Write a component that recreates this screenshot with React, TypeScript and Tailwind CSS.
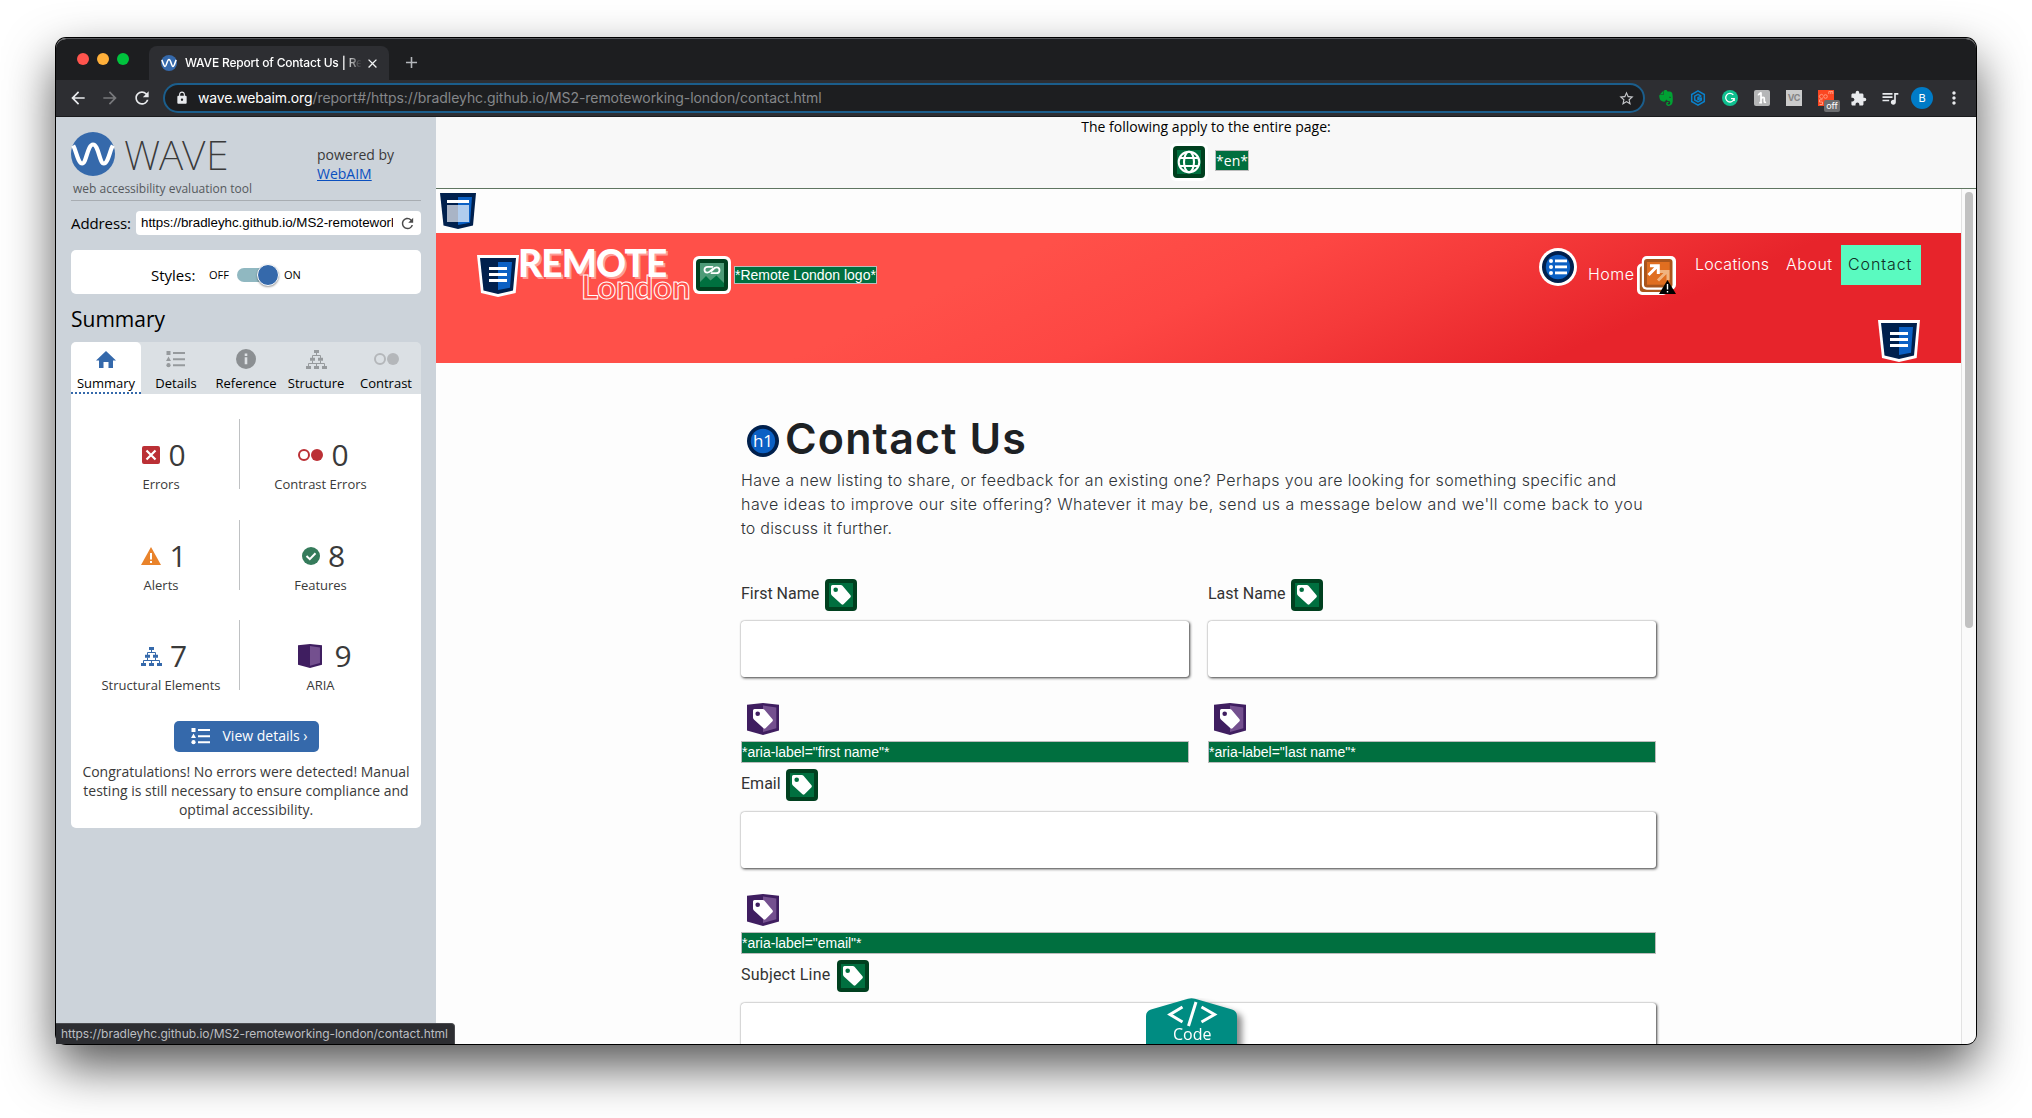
import type { ReactNode } from "react";
import {
  MdAdd,
  MdArrowBack,
  MdArrowForward,
  MdClose,
  MdExtension,
  MdLock,
  MdMoreVert,
  MdQueueMusic,
  MdRefresh,
  MdStarBorder,
} from "react-icons/md";
import { SiEvernote } from "react-icons/si";

function WaveLogo({ size }: { size: number }) {
  return (
    <svg width={size} height={size} viewBox="0 0 44 44" className="shrink-0">
      <circle cx="22" cy="22" r="22" fill="#3569ab" />
      <path
        d="M2.200 13.500C5 18 7 31.500 11.200 31.500S16.500 12.500 22 12.500 28.500 31.500 32.800 31.500 39 18 41.800 13.500"
        fill="none"
        stroke="#fff"
        strokeWidth="4.200"
      />
    </svg>
  );
}

function Shield({ lines, plain }: { lines?: boolean; plain?: boolean }) {
  return (
    <svg width="42" height="42" viewBox="0 0 42 42" className="shrink-0">
      {!plain && <path d="M0 0H42L38.700 38 21 42 4 38Z" fill="#fff" />}
      <path d="M3 3H39L36 35.600 21 39 6.500 35.600Z" fill="#00204d" />
      <path d="M21 7H35L33 32.700 21 35Z" fill="#0b60c4" />
      {lines ? (
        <path d="M12 12H30V15H12ZM12 18H30V21H12ZM12 24H30V27H12Z" fill="#fff" />
      ) : (
        <>
          <path d="M10 10H32V13H10Z" fill="#fff" />
          <path d="M10 15H21V32H10Z" fill="#a9b4c6" />
          <path d="M21 15H32V32H21Z" fill="#b1cdee" />
        </>
      )}
    </svg>
  );
}

function TagShape() {
  return (
    <path
      fillRule="evenodd"
      fill="#fff"
      d="M7.500 6H15.800Q16.800 6 17.500 6.700L25.500 16.200Q26.300 17.200 25.500 18.200L18.500 25.300Q17.500 26.200 16.500 25.300L6.900 16.500Q6 15.600 6 14.500V7.500Q6 6 7.500 6ZM10.700 8.500a2.300 2.300 0 1 0 0 4.600a2.300 2.300 0 1 0 0-4.600Z"
    />
  );
}

function GreenTag() {
  return (
    <svg width="32" height="32" viewBox="0 0 32 32" className="shrink-0">
      <rect width="32" height="32" rx="4" fill="#00401f" />
      <rect x="4" y="4" width="24" height="24" fill="#006f3f" />
      <TagShape />
    </svg>
  );
}

function AriaShape() {
  return (
    <>
      <path d="M0 1.800 16 0 32 1.800V27.500L16 32 0 27.500Z" fill="#3f1e60" />
      <path d="M16 2.500 29.300 4.500V25.300L16 29Z" fill="#74508f" />
    </>
  );
}

function PurpleTag() {
  return (
    <svg width="32" height="32" viewBox="0 0 32 32" className="ml-1.5 block">
      <AriaShape />
      <TagShape />
    </svg>
  );
}

function GlobeIcon() {
  return (
    <svg width="38" height="38" viewBox="0 0 38 38" className="shrink-0">
      <rect width="38" height="38" rx="6" fill="#fff" />
      <rect x="3" y="3" width="32" height="32" rx="4" fill="#00401f" />
      <rect x="7" y="7" width="24" height="24" fill="#006f3f" />
      <g fill="none" stroke="#fff" strokeWidth="2.100">
        <circle cx="19" cy="19" r="10.300" />
        <ellipse cx="19" cy="19" rx="5" ry="10.300" />
        <path d="M9.500 15H28.500M9.500 23H28.500" />
      </g>
    </svg>
  );
}

function LinkedImageIcon() {
  return (
    <svg width="38" height="38" viewBox="0 0 38 38" className="shrink-0">
      <rect width="38" height="38" rx="6" fill="#fff" />
      <rect x="3" y="3" width="32" height="32" rx="4" fill="#00401f" />
      <rect x="7" y="7" width="24" height="24" fill="#4d9b77" />
      <path d="M7 26 13 20 17.500 24.500 23.500 19.500 31 27V31H7Z" fill="#00703f" />
      <g fill="none" stroke="#fff" strokeWidth="1.800" strokeLinecap="round">
        <path d="M19.500 10.800H14.800C12.500 10.800 11.500 12.500 11.500 13.800S12.500 16.600 14.300 16.600C17.500 16.600 18 13.600 20 12.800" />
        <path d="M18.500 17.200H23.200C25.500 17.200 26.500 15.500 26.500 14.200S25.500 11.400 23.700 11.400C20.500 11.400 20 14.400 18 15.200" />
      </g>
    </svg>
  );
}

function NavListIcon() {
  return (
    <svg width="38" height="38" viewBox="0 0 38 38" className="shrink-0">
      <circle cx="19" cy="19" r="19" fill="#fff" />
      <circle cx="19" cy="19" r="16" fill="#00204d" />
      <circle cx="19" cy="19" r="12.200" fill="#0b60c4" />
      <g fill="#fff">
        {[13, 19, 25].map((y) => (
          <g key={y}>
            <circle cx="12" cy={y} r="2" />
            <rect x="16" y={y - 1.5} width="12" height="2.800" />
          </g>
        ))}
      </g>
    </svg>
  );
}

function RedundantLinkIcon() {
  return (
    <svg width="39" height="39" viewBox="0 0 39 39" className="shrink-0">
      <rect y="7.500" width="31" height="31.500" rx="5" fill="#fff" />
      <rect x="2.800" y="10" width="25" height="26" rx="3" fill="#a9551c" />
      <rect x="4.800" width="34.200" height="33.800" rx="5" fill="#fff" />
      <rect x="7" y="3" width="28.500" height="28.500" rx="3" fill="#a9551c" />
      <rect x="10" y="6" width="22.700" height="22.700" fill="#e06e20" />
      <g fill="none" strokeWidth="3">
        <path d="M21 24.500 30 15.500M22.500 15.500H31V24" stroke="#f0b37f" />
        <path d="M11.500 19 20.500 10M13 9.800H21.300V18" stroke="#fff" />
      </g>
      <path d="M30.500 24 39 38H22Z" fill="#000" />
      <path d="M30.500 28V33.500M30.500 35V36.600" stroke="#fff" strokeWidth="1.400" />
    </svg>
  );
}

function ListGlyph({ color }: { color: string }) {
  return (
    <svg width="20" height="18" viewBox="0 0 20 18" fill={color}>
      <path d="M.5 1h4v4h-4zM2.500 6.500 5 11H0zM7 2h12v2H7zM7 8.200h12v2H7zM7 14.200h12v2H7z" />
      <circle cx="2.500" cy="15.200" r="2.100" />
    </svg>
  );
}

function TreeGlyph({ color }: { color: string }) {
  return (
    <svg width="21" height="19" viewBox="0 0 21 19" fill={color}>
      <path d="M8 0h5v3H8zM4 7.800h5v3H4zM12 7.800h5v3h-5zM0 16h5v3H0zM8 16h5v3H8zM16 16h5v3h-5z" />
      <path
        d="M10.500 3v2.500M6.500 8V5.500h8V8M6.500 10.500v3M14.500 10.500v3M2.500 16v-2.500h16V16M10.500 13.500V16"
        fill="none"
        stroke={color}
      />
    </svg>
  );
}

function ContrastGlyph({ color }: { color: string }) {
  return (
    <svg width="25" height="12" viewBox="0 0 25 12">
      <circle cx="6" cy="6" r="5" fill="none" stroke={color} strokeWidth="2" />
      <circle cx="19" cy="6" r="6" fill={color} />
    </svg>
  );
}

const tabs: { label: string; icon: ReactNode; active?: boolean }[] = [
  {
    label: "Summary",
    active: true,
    icon: (
      <svg width="20" height="17" viewBox="0 0 20 17">
        <path d="M10 0 20 9.500H17V17H12.500V11H7.500V17H3V9.500H0Z" fill="#3569ab" />
      </svg>
    ),
  },
  { label: "Details", icon: <ListGlyph color="#969a9d" /> },
  {
    label: "Reference",
    icon: (
      <svg width="20" height="20" viewBox="0 0 20 20">
        <circle cx="10" cy="10" r="10" fill="#8b8f92" />
        <path d="M8.700 4.500h2.600v2.600H8.700zM8.700 8.300h2.600v7H8.700z" fill="#dde1e4" />
      </svg>
    ),
  },
  { label: "Structure", icon: <TreeGlyph color="#969a9d" /> },
  { label: "Contrast", icon: <ContrastGlyph color="#b4b7ba" /> },
];

const counts: { icon: ReactNode; value: number; label: string }[][] = [
  [
    {
      icon: (
        <svg width="18" height="18" viewBox="0 0 18 18">
          <rect width="18" height="18" rx="2" fill="#bb3035" />
          <path d="M4.500 4.500 13.500 13.500M13.500 4.500 4.500 13.500" stroke="#fff" strokeWidth="2.200" />
        </svg>
      ),
      value: 0,
      label: "Errors",
    },
    { icon: <ContrastGlyph color="#bb3035" />, value: 0, label: "Contrast Errors" },
  ],
  [
    {
      icon: (
        <svg width="20" height="18" viewBox="0 0 20 18">
          <path d="M10 0 20 18H0Z" fill="#e9832b" />
          <path d="M10 6V12.500M10 14V16" stroke="#fff" strokeWidth="2" />
        </svg>
      ),
      value: 1,
      label: "Alerts",
    },
    {
      icon: (
        <svg width="18" height="18" viewBox="0 0 18 18">
          <circle cx="9" cy="9" r="9" fill="#357b5b" />
          <path d="M4.500 9 7.800 12.200 13.500 6.300" fill="none" stroke="#fff" strokeWidth="2" />
        </svg>
      ),
      value: 8,
      label: "Features",
    },
  ],
  [
    { icon: <TreeGlyph color="#3569ab" />, value: 7, label: "Structural Elements" },
    {
      icon: (
        <svg width="24" height="24" viewBox="0 0 32 32" className="mr-1 ml-[3px]">
          <AriaShape />
        </svg>
      ),
      value: 9,
      label: "ARIA",
    },
  ],
];

function Chrome() {
  return (
    <>
      <div className="flex h-[41px] bg-[#1d1e20]">
        <div className="mt-[14px] ml-[21px] flex gap-2">
          <span className="size-3 rounded-full bg-[#ff544d]" />
          <span className="size-3 rounded-full bg-[#ffb03a]" />
          <span className="size-3 rounded-full bg-[#00c33d]" />
        </div>
        <div className="mt-[7px] ml-5 flex h-[34px] w-[240px] items-center rounded-t-lg bg-[#2d2e32] pl-3 font-['Inter'] text-xs font-medium tracking-[-0.18px] text-white">
          <WaveLogo size={16} />
          <span className="ml-2 w-[176px] overflow-hidden whitespace-nowrap [mask-image:linear-gradient(to_right,#000_160px,transparent_178px)]">
            WAVE Report of Contact Us | R
            <span className="opacity-60">e</span>
          </span>
          <MdClose className="ml-[4px] size-[15px] shrink-0 text-[#f1f3f4]" />
        </div>
        <MdAdd className="mt-[14px] ml-[13px] size-[19px] text-[#b4b7bb]" />
      </div>
      <div className="flex h-[37px] items-center border-b border-[#1a1b1d] bg-[#2d2e32] text-[#e8eaed]">
        <MdArrowBack className="ml-[12px] size-[20px]" />
        <MdArrowForward className="ml-[12px] size-[20px] text-[#77787b]" />
        <MdRefresh className="ml-[12px] size-[20px]" />
        <div className="ml-[11px] flex h-[30px] w-[1482px] items-center rounded-full border-2 border-[#1b5e8c] bg-[#1d1e20] font-['Inter'] text-sm whitespace-nowrap">
          <MdLock className="ml-[10px] size-[14px]" />
          <span className="ml-[9px] tracking-[-0.14px] text-white">wave.webaim.org</span>
          <span className="tracking-[-0.06px] text-[#85878a]">
            /report#/https://bradleyhc.github.io/MS2-remoteworking-london/contact.html
          </span>
          <MdStarBorder className="mr-[8px] ml-auto size-[17px] text-[#c4c6c9]" />
        </div>
        <div className="ml-[5px] flex items-center">
          <div className="flex w-8 justify-center">
            <SiEvernote className="size-4 text-[#00a233]" />
          </div>
          <div className="flex w-8 justify-center">
            <svg width="16" height="16" viewBox="0 0 16 16" fill="none" stroke="#0a80c9" strokeWidth="1.500">
              <path d="M8 .9 14.300 4.500V11.500L8 15.100 1.700 11.500V4.500Z" />
              <path d="M11.300 6.200 8 4.300 4.700 6.200V10L8 11.800 11.300 10V8.300L8 9.500V7.500L11.300 6.200" />
            </svg>
          </div>
          <div className="flex w-8 justify-center">
            <svg width="16" height="16" viewBox="0 0 16 16" fill="none">
              <circle cx="8" cy="8" r="8" fill="#0fbf8f" />
              <path d="M11.300 4.900A4.300 4.300 0 1 0 12.200 8.600H9M12.200 8.600V11" stroke="#fff" strokeWidth="1.300" />
            </svg>
          </div>
          <div className="flex w-8 justify-center">
            <svg width="16" height="16" viewBox="0 0 16 16" fill="none">
              <rect width="16" height="16" rx="2" fill="#b5b6b7" />
              <path
                d="M3.800 4.500C5.500 5 6 2.500 7 3V12.500M7 9C8 7 10.300 6.500 10.300 9V11.500Q10.300 12.800 12 12M5.200 12.700H8"
                stroke="#fff"
                strokeWidth="1.700"
              />
            </svg>
          </div>
          <div className="flex w-8 justify-center">
            <span className="flex size-4 items-center justify-center bg-[#cbcbcb] font-['Inter'] text-[9px] font-bold tracking-[-0.3px] text-[#858585]">
              VC
            </span>
          </div>
          <div className="flex w-8 justify-center">
            <span className="relative size-4 bg-[#fb4722]">
              <svg width="16" height="16" viewBox="0 0 16 16" fill="none" stroke="#ff9c80" strokeWidth="1">
                <path d="M5 5.200A2 2 0 1 0 5 7.800M9.300 6.500a1.800 1.800 0 1 1-3.600 0 1.800 1.800 0 1 1 3.600 0M10.800 4V1.500h2V4M12.800 1.500h2V4M4.500 9.800H1.500v2.200h3v2.500h-3" />
              </svg>
              <span className="absolute top-[10px] left-[6px] flex h-3 w-4 items-center justify-center rounded-xs bg-[#6c6d6f] font-['Inter'] text-[9px] text-white">
                off
              </span>
            </span>
          </div>
          <div className="flex w-8 justify-center">
            <MdExtension className="size-[17px]" />
          </div>
          <div className="flex w-8 justify-center">
            <MdQueueMusic className="size-5" />
          </div>
          <div className="flex w-8 justify-center">
            <span className="flex size-[22px] items-center justify-center rounded-full bg-[#007bc7] font-['Inter'] text-[11px] text-white">
              B
            </span>
          </div>
          <div className="flex w-8 justify-center">
            <MdMoreVert className="size-5" />
          </div>
        </div>
      </div>
    </>
  );
}

function Sidebar() {
  return (
    <aside className="flex w-[380px] shrink-0 flex-col bg-[#ccd3da] px-[15px] font-['Open_Sans'] text-[#3a3a3a]">
      <header className="flex h-[84px] border-b border-[#a8adb2] pt-[15px]">
        <div className="w-[246px]">
          <div className="flex h-11 items-start">
            <WaveLogo size={44} />
            <span className="ml-[9px] h-11 font-['Noto_Sans'] text-[41px] leading-[45px] font-extralight tracking-[0.5px]">
              WAVE
            </span>
          </div>
          <p className="mt-[3px] ml-[2px] text-xs leading-5 text-[#55595d]">
            web accessibility evaluation tool
          </p>
        </div>
        <p className="mt-[13px] text-sm leading-[19px]">
          powered by
          <br />
          <a className="text-[#0a4fbf] underline">WebAIM</a>
        </p>
      </header>

      <div className="mt-[10px] flex h-6 items-center">
        <span className="w-[65px] text-[15px] leading-6 tracking-[-0.1px] text-black">Address:</span>
        <div className="flex h-6 w-[285px] items-center rounded-sm bg-white pl-[5px]">
          <span className="w-[252px] overflow-hidden font-['Liberation_Sans'] text-[13.33px] leading-6 tracking-[-0.01px] whitespace-nowrap text-black">
            https://bradleyhc.github.io/MS2-remotework
          </span>
          <MdRefresh className="ml-[6px] size-[17px] text-[#4a4a4a]" />
        </div>
      </div>

      <div className="mt-[15px] flex h-11 items-center rounded-[5px] bg-white pl-20 text-black">
        <span className="mt-1.5 w-[58px] text-[15px]">Styles:</span>
        <span className="mt-1.5 w-7 text-[11px]">OFF</span>
        <span className="mt-1.5 flex h-[14px] w-[42px] items-center justify-end rounded-full bg-[#90b8c1]">
          <span className="box-content size-5 shrink-0 rounded-full border border-white bg-[#3569ab] shadow-[0_1px_2px_rgba(0,0,0,0.4)]" />
        </span>
        <span className="mt-1.5 ml-[5px] text-[11px]">ON</span>
      </div>

      <h2 className="mt-[10px] text-[21px] leading-[30px] text-black">Summary</h2>

      <div className="mt-2 flex h-[52px] rounded-t-[5px] bg-[#dbe0e4]">
        {tabs.map((t) => (
          <div
            key={t.label}
            className={
              t.active
                ? "flex w-[70px] flex-col items-center rounded-t-[5px] border-b-2 border-dotted border-[#3569ab] bg-white"
                : "flex w-[70px] flex-col items-center"
            }
          >
            <span className="mt-[7px] flex h-5 shrink-0 items-center">{t.icon}</span>
            <span className="mt-1 h-5 shrink-0 text-[13px] leading-[21px] whitespace-nowrap text-black">{t.label}</span>
          </div>
        ))}
      </div>

      <section className="h-[434px] rounded-b-[5px] bg-white">
        <div className="pt-[25px]">
          {counts.map((row, i) => (
            <div key={i} className="flex h-[100.5px] pl-3">
              {row.map((c, j) => (
                <div
                  key={c.label}
                  className={
                    j === 0
                      ? "flex h-[70px] w-[157px] flex-col items-center border-r border-[#bfc1c3]"
                      : "flex h-[70px] w-[161px] flex-col items-center"
                  }
                >
                  <div className="mt-[18px] flex h-9 items-center gap-2 pl-[6px]">
                    {c.icon}
                    <span className="text-[30px] leading-9">{c.value}</span>
                  </div>
                  <span className="mt-[1px] text-[13px] leading-5 whitespace-nowrap">{c.label}</span>
                </div>
              ))}
            </div>
          ))}
        </div>
        <button className="mx-auto flex h-[31px] w-[145px] items-center rounded-[5px] bg-[#3569ab] pl-[17px] text-sm text-white">
          <ListGlyph color="#fff" />
          <span className="ml-3 whitespace-nowrap">View details ›</span>
        </button>
        <p className="mt-[10px] text-center text-sm leading-[19px]">
          Congratulations! No errors were detected! Manual
          <br />
          testing is still necessary to ensure compliance and
          <br />
          optimal accessibility.
        </p>
      </section>
    </aside>
  );
}

function Banner() {
  return (
    <div className="flex h-[130px] bg-[linear-gradient(156deg,#ff5049_35%,#fd4643_50%,#f53a3a_61%,#e7242b_77%)] font-['Inter'] font-light text-white">
      <div className="mt-[22px] ml-[41px]">
        <Shield lines />
      </div>
      <div className="mt-[10px] w-[175px] -ml-px font-['Lato']">
        <div className="text-[37px] leading-[40px] font-black tracking-[-0.8px] [text-shadow:2px_2px_0_rgba(255,190,185,0.7)]">
          REMOTE
        </div>
        <div className="-mt-[15px] ml-[63px] text-[33px] leading-[36px] font-bold tracking-[-0.1px] text-transparent [-webkit-text-stroke:1px_white]">
          London
        </div>
      </div>
      <div className="mt-[23px]">
        <LinkedImageIcon />
      </div>
      <span className="mt-[33px] ml-[3px] h-[18px] border border-[#bcbcbc] bg-[#006f3f] font-['Liberation_Sans'] text-sm leading-4 font-normal">
        *Remote London logo*
      </span>
      <nav className="mt-[12px] ml-auto w-[382px] text-base leading-6">
        <div className="flex h-10 items-start">
          <div className="mt-[3px] w-[49px]">
            <NavListIcon />
          </div>
          <span className="mt-[17px] w-[49px] tracking-[0.45px]">Home</span>
          <div className="mt-[11px]">
            <RedundantLinkIcon />
          </div>
          <span className="mt-[7px] ml-[19px] w-[91px] tracking-[0.25px]">Locations</span>
          <span className="mt-[7px] w-[55px] tracking-[0.5px]">About</span>
          <span className="h-10 w-20 bg-[#5afac0] pt-[7px] pl-[7px] tracking-[0.9px] text-[#102d25]">Contact</span>
        </div>
        <div className="mt-[35px] flex justify-end pr-px">
          <Shield lines />
        </div>
      </nav>
      <div className="w-10" />
    </div>
  );
}

function Field() {
  return (
    <div className="mr-px h-14 rounded-[3px] bg-white shadow-[0_0_1px_rgba(0,0,0,0.5),1px_1px_3px_rgba(0,0,0,0.75)]" />
  );
}

function AriaBar({ name }: { name: string }) {
  return (
    <div className="mt-1.5 mr-px h-[22px] border border-[#bcbcbc] bg-[#006f3f] font-['Liberation_Sans'] text-sm leading-5 tracking-[-0.03px] text-white">
      *aria-label="{name}"*
    </div>
  );
}

function Label({ children, width }: { children: ReactNode; width: string }) {
  return (
    <div className="flex h-8 font-['Roboto'] text-base leading-6 whitespace-nowrap text-[#333]">
      <span className={"mt-[3px] " + width}>{children}</span>
      <GreenTag />
    </div>
  );
}

function PageView() {
  return (
    <div className="h-[855px] w-[1525px] overflow-hidden bg-[#fdfdfd]">
      <div className="h-11 pt-px pl-px">
        <Shield plain />
      </div>
      <Banner />
      <div className="ml-[305px] w-[916px]">
        <h1 className="mt-[50px] flex h-12 items-start font-['Inter'] text-[43px] leading-[50px] font-[560] tracking-[1.15px] text-[#1d2124]">
          <svg width="32" height="32" viewBox="0 0 32 32" className="mt-3 mr-[6px] ml-1.5 shrink-0">
            <circle cx="16" cy="16" r="16" fill="#00204d" />
            <circle cx="16" cy="16" r="12.200" fill="#0b60c4" />
            <text x="16" y="22" textAnchor="middle" className="fill-white font-['Open_Sans'] text-[17px] font-normal tracking-normal">
              h1
            </text>
          </svg>
          Contact Us
        </h1>
        <p className="mt-[7px] font-['Inter'] text-base leading-6 font-light whitespace-nowrap text-[#2f3337]">
          <span className="block tracking-[0.373px]">
            Have a new listing to share, or feedback for an existing one? Perhaps you are looking for something specific and
          </span>
          <span className="block tracking-[0.46px]">
            have ideas to improve our site offering? Whatever it may be, send us a message below and we'll come back to you
          </span>
          <span className="block tracking-[0.22px]">to discuss it further.</span>
        </p>
        <div className="mt-[39px] flex gap-[18px]">
          <div className="w-[449px]">
            <Label width="w-[84px]">First Name</Label>
            <div className="mt-[10px] mb-[26px]">
              <Field />
            </div>
            <PurpleTag />
            <AriaBar name="first name" />
          </div>
          <div className="w-[449px]">
            <Label width="w-[83px]">Last Name</Label>
            <div className="mt-[10px] mb-[26px]">
              <Field />
            </div>
            <PurpleTag />
            <AriaBar name="last name" />
          </div>
        </div>
        <div className="mt-1.5">
          <Label width="w-[45px]">Email</Label>
          <div className="mt-[11px] mb-[26px]">
            <Field />
          </div>
          <PurpleTag />
          <AriaBar name="email" />
        </div>
        <div className="mt-1.5">
          <Label width="w-[96px] tracking-[0.2px]">Subject Line</Label>
          <div className="mt-[11px]">
            <Field />
          </div>
        </div>
      </div>
    </div>
  );
}

export default function App() {
  return (
    <div className="h-[1118px] w-[2032px] overflow-hidden bg-white">
      <div className="relative mt-[38px] ml-[56px] flex h-[1006px] w-[1920px] flex-col rounded-[10px] shadow-[0_22px_50px_rgba(0,0,0,0.68),0_0_0_1px_#000]">
        <div className="flex h-[1006px] flex-col overflow-hidden rounded-t-[10px] rounded-b-[9px] border-t border-[#55565a]">
          <Chrome />
          <div className="flex flex-1">
            <Sidebar />
            <main className="w-[1540px]">
              <div className="h-[72px] border-b border-[#5f7560] bg-[#f8f8f8] font-['Open_Sans'] text-sm">
                <p className="text-center leading-[19px] text-black">The following apply to the entire page:</p>
                <div className="mt-[7px] flex items-start justify-center pl-[7px]">
                  <GlobeIcon />
                  <span className="mt-[7px] ml-[7px] h-[21px] w-[34px] border border-[#bcbcbc] bg-[#006f3f] text-center leading-[19px] text-white">
                    *en*
                  </span>
                </div>
              </div>
              <div className="flex">
                <PageView />
                <div className="w-[15px] border-l border-[#e2e2e2] bg-[#fafafa] pt-[3px] pl-[3px]">
                  <div className="h-[436px] w-2 rounded-full bg-[#c1c1c1]" />
                </div>
              </div>
            </main>
          </div>
        </div>

        <div className="absolute bottom-0 left-[1090px] h-[46px] w-[110px] overflow-hidden">
          <svg width="110" height="60" viewBox="0 0 110 60" className="drop-shadow-[5px_4px_3px_rgba(0,0,0,0.45)]">
            <path d="M0 60V18Q0 13 5 11.500L42 .8Q45.500-.4 49 .8L86 11.500Q91 13 91 18V60Z" fill="#008c82" />
            <g fill="none" stroke="#fff" strokeWidth="3">
              <path d="M36.500 9 24 16.500 36.500 24M55.500 9 68.500 16.500 55.500 24M50 4 42.500 28" />
            </g>
            <text x="27" y="42" className="fill-white font-['Open_Sans'] text-[16px]">
              Code
            </text>
          </svg>
        </div>

        <div className="absolute bottom-0 left-0 h-[21px] w-[399px] rounded-tr-[4px] border-t border-r border-[#4a4b4f] bg-[#2d2e32] pl-[5px] font-['Inter'] text-xs leading-5 tracking-[-0.04px] whitespace-nowrap text-[#bcbec2]">
          https://bradleyhc.github.io/MS2-remoteworking-london/contact.html
        </div>
      </div>
    </div>
  );
}
